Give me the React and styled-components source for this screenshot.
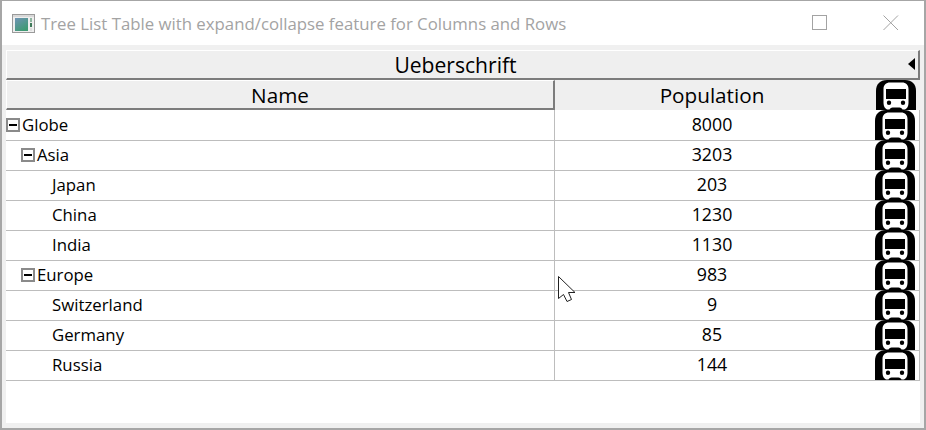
import styled, { createGlobalStyle } from "styled-components";

const GlobalStyle = createGlobalStyle`
  html, body {
    margin: 0;
    padding: 0;
    background: #fff;
  }
  body {
    font-family: "Open Sans", "Noto Sans", "Liberation Sans", sans-serif;
  }
`;

const Window = styled.div`
  position: relative;
  width: 926px;
  height: 430px;
  box-sizing: border-box;
  border: 1px solid #a6a6a6;
  border-bottom-width: 2px;
  border-right-width: 2px;
  border-left-width: 2px;
  display: flex;
  flex-direction: column;
  background: #f0f0f0;
  overflow: hidden;
`;

const TitleBar = styled.div`
  height: 44px;
  flex: none;
  background: #fff;
  display: flex;
  align-items: center;
  padding-left: 10px;
`;

const Title = styled.span`
  margin-left: 6px;
  font-size: 16.8px;
  color: #a3a3a3;
  white-space: nowrap;
  flex: 1;
`;

const WinButton = styled.div`
  width: 71px;
  height: 44px;
  box-sizing: border-box;
  padding-left: 5px;
  display: flex;
  align-items: center;
  justify-content: center;
  color: #a3a3a3;
`;

const Content = styled.div`
  flex: 1;
  display: flex;
  flex-direction: column;
  padding: 5px 4px 5px 4px;
  min-height: 0;
`;

const Tree = styled.div`
  flex: 1;
  background: #fff;
  display: flex;
  flex-direction: column;
`;

const SpanHeader = styled.div`
  height: 30px;
  box-sizing: border-box;
  flex: none;
  background: #efefef;
  border-top: 1px solid #fff;
  border-left: 1px solid #fff;
  border-bottom: 2px solid #7c7c7c;
  border-right: 2px solid #7c7c7c;
  padding-right: 14px;
  display: flex;
  align-items: center;
  justify-content: center;
  position: relative;
  font-size: 21.1px;
  color: #000;
`;

const CollapseArrow = styled.div`
  position: absolute;
  right: 3px;
  top: 7px;
  width: 0;
  height: 0;
  border-top: 6.5px solid transparent;
  border-bottom: 6.5px solid transparent;
  border-right: 7px solid #000;
`;

const Row = styled.div`
  display: grid;
  grid-template-columns: 549px 320px 45px;
  height: 30px;
  flex: none;
  box-sizing: border-box;
`;

const HeaderCell = styled.div`
  height: 30px;
  box-sizing: border-box;
  background: #efefef;
  display: flex;
  align-items: center;
  justify-content: center;
  font-size: 20.7px;
  color: #000;
  padding-right: ${(p) => (p.$raised ? 0 : 6)}px;
  ${(p) => p.$raised && `
    border-top: 1px solid #fff;
    border-left: 1px solid #fff;
    border-bottom: 2px solid #7c7c7c;
    border-right: 2px solid #7c7c7c;
  `}
`;

const NameCell = styled.div`
  box-sizing: border-box;
  border-bottom: 1px solid #bdbdbd;
  border-right: 1px solid #bdbdbd;
  display: flex;
  align-items: center;
  font-size: 16.8px;
  color: #000;
  padding-left: ${(p) => p.$depth * 15}px;
  padding-bottom: 2px;
  white-space: nowrap;
`;

const ValueCell = styled.div`
  box-sizing: border-box;
  border-bottom: 1px solid #bdbdbd;
  display: flex;
  align-items: center;
  justify-content: center;
  font-size: 17.8px;
  color: #000;
  padding-right: 6px;
  padding-bottom: 2px;
`;

const IconCell = styled.div`
  box-sizing: border-box;
  border-bottom: 1px solid #bdbdbd;
  border-right: 1px solid #bdbdbd;
  display: flex;
  justify-content: flex-start;
`;

const HeaderIconCell = styled.div`
  background: #efefef;
  height: 30px;
  padding-left: 1px;
`;

const Expander = styled.span`
  width: 14px;
  height: 14px;
  box-sizing: border-box;
  border: 2px solid #8a8a8a;
  background: #fff;
  display: inline-flex;
  align-items: center;
  justify-content: center;
  margin-right: 2px;
  margin-top: 1px;
  flex: none;

  &::after {
    content: "";
    width: 8px;
    height: 2px;
    background: #000;
  }
`;

const Leaf = styled.span`
  width: 16px;
  flex: none;
`;

const Cursor = styled.svg`
  position: absolute;
  left: 555px;
  top: 274px;
`;

const BusSvg = styled.svg`
  display: block;
`;

const BusIcon = () => (
  <BusSvg width="40" height="30" viewBox="0 0 40 30">
    <path d="M0 30V11C0 4 4 0 11 0H29C36 0 40 4 40 11V30Z" fill="#000" />
    <path
      fillRule="evenodd"
      fill="#fff"
      d="M7.500 9C7.500 5 10 2.500 14 2.500H26C30 2.500 32.500 5 32.500 9V23C32.500 26.500 31 28.500 29 29.500H26.500C26 28.500 25 27.500 23.500 27.500H16.500C15 27.500 14 28.500 13.500 29.500H11C9 28.500 7.500 26.500 7.500 23ZM10 9V19H30V9ZM13 20.500A2.200 2.200 0 1 0 13 24.900A2.200 2.200 0 1 0 13 20.500ZM27 20.500A2.200 2.200 0 1 0 27 24.900A2.200 2.200 0 1 0 27 20.500Z"
    />
  </BusSvg>
);

const rows = [
  { name: "Globe", value: 8000, depth: 0, open: true },
  { name: "Asia", value: 3203, depth: 1, open: true },
  { name: "Japan", value: 203, depth: 2 },
  { name: "China", value: 1230, depth: 2 },
  { name: "India", value: 1130, depth: 2 },
  { name: "Europe", value: 983, depth: 1, open: true },
  { name: "Switzerland", value: 9, depth: 2 },
  { name: "Germany", value: 85, depth: 2 },
  { name: "Russia", value: 144, depth: 2 },
];

export default function App() {
  return (
    <Window>
      <GlobalStyle />
      <TitleBar>
        <svg width="23" height="19" viewBox="0 0 23 19">
          <defs>
            <linearGradient id="appPane" x1="0" y1="0" x2="0.6" y2="1">
              <stop offset="0" stopColor="#6f93b5" />
              <stop offset="1" stopColor="#3f9a73" />
            </linearGradient>
          </defs>
          <rect x="0.500" y="0.500" width="22" height="18" fill="#eeeeee" stroke="#9a9a9a" />
          <rect x="1" y="1" width="21" height="2" fill="#d8d8d8" />
          <rect x="3" y="4" width="13" height="13" fill="url(#appPane)" />
          <rect x="18" y="4" width="2" height="4" fill="#8fb5a0" />
          <rect x="18" y="9" width="2" height="4" fill="#3f7a5a" />
          <rect x="18" y="14" width="2" height="3" fill="#dddddd" />
        </svg>
        <Title>Tree List Table with expand/collapse feature for Columns and Rows</Title>
        <WinButton>
          <svg width="16" height="16" viewBox="0 0 16 16">
            <rect x="0.500" y="0.500" width="14" height="14" fill="none" stroke="currentColor" />
          </svg>
        </WinButton>
        <WinButton>
          <svg width="16" height="16" viewBox="0 0 16 16">
            <path d="M0.500 0.500L15 15M15 0.500L0.500 15" stroke="currentColor" fill="none" />
          </svg>
        </WinButton>
      </TitleBar>
      <Content>
        <Tree>
          <SpanHeader>
            Ueberschrift
            <CollapseArrow />
          </SpanHeader>
          <Row>
            <HeaderCell $raised>Name</HeaderCell>
            <HeaderCell>Population</HeaderCell>
            <HeaderIconCell>
              <BusIcon />
            </HeaderIconCell>
          </Row>
          {rows.map((row) => (
            <Row key={row.name}>
              <NameCell $depth={row.depth}>
                {row.open ? <Expander /> : <Leaf />}
                {row.name}
              </NameCell>
              <ValueCell>{row.value}</ValueCell>
              <IconCell>
                <BusIcon />
              </IconCell>
            </Row>
          ))}
        </Tree>
      </Content>
      <Cursor width="20" height="29" viewBox="0 0 20 29">
        <path d="M1.500 1.500V23.500L6.500 19.500L10 26.500L14.500 24.500L11.500 17.500H18Z" fill="#fff" stroke="#222" strokeWidth="1" />
      </Cursor>
    </Window>
  );
}
